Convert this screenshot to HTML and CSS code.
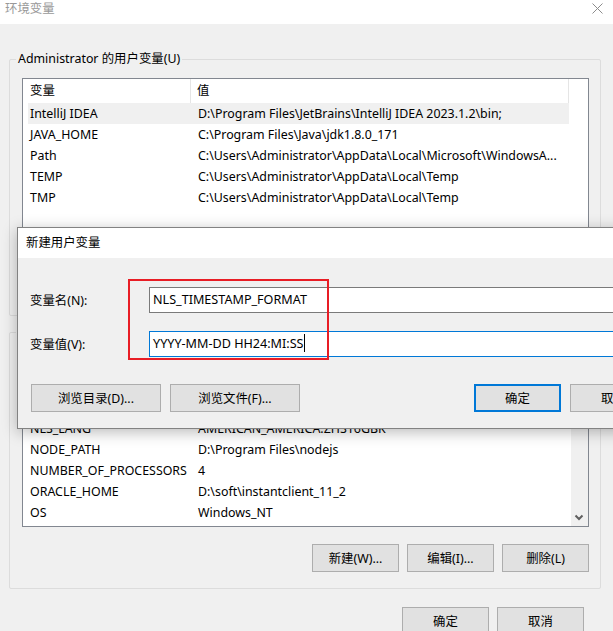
FILE: index.html
```html
<!DOCTYPE html>
<html lang="zh-CN">
  <head>
    <meta charset="UTF-8" />
    <meta name="viewport" content="width=device-width, initial-scale=1.0" />
    <title>环境变量</title>
    <link rel="stylesheet" href="styles.css">
  </head>
  <body>
    <div class="window">
      <div class="titlebar">
        <span class="title">环境变量</span>
        <svg class="close" width="11" height="11" viewBox="0 0 11 11">
          <path d="M0.5 0.5 L10.5 10.5 M10.5 0.5 L0.5 10.5" stroke="#8c8c8c" stroke-width="1" fill="none" />
        </svg>
      </div>

      <div class="client">
        <div class="group">
          <span class="group-title">Administrator 的用户变量(U)</span>
          <div class="list">
            <div class="list-body">
              <div class="list-head">
                <span class="head-name">变量</span>
                <span class="head-value">值</span>
              </div>
              <div class="row selected"><span class="cell-name">IntelliJ IDEA</span><span class="cell-value">D:\Program Files\JetBrains\IntelliJ IDEA 2023.1.2\bin;</span></div>
              <div class="row"><span class="cell-name">JAVA_HOME</span><span class="cell-value">C:\Program Files\Java\jdk1.8.0_171</span></div>
              <div class="row"><span class="cell-name">Path</span><span class="cell-value">C:\Users\Administrator\AppData\Local\Microsoft\WindowsA...</span></div>
              <div class="row"><span class="cell-name">TEMP</span><span class="cell-value">C:\Users\Administrator\AppData\Local\Temp</span></div>
              <div class="row"><span class="cell-name">TMP</span><span class="cell-value">C:\Users\Administrator\AppData\Local\Temp</span></div>
            </div>
          </div>
          <div class="group-buttons">
            <button class="btn">新建(N)...</button>
            <button class="btn">编辑(E)...</button>
            <button class="btn">删除(D)</button>
          </div>
        </div>

        <div class="group second">
          <span class="group-title">系统变量(S)</span>
          <div class="list">
            <div class="list-body">
              <div class="list-head">
                <span class="head-name">变量</span>
                <span class="head-value">值</span>
              </div>
              <div class="row"><span class="cell-name">ComSpec</span><span class="cell-value">C:\Windows\system32\cmd.exe</span></div>
              <div class="row"><span class="cell-name">DriverData</span><span class="cell-value">C:\Windows\System32\Drivers\DriverData</span></div>
              <div class="row"><span class="cell-name">NLS_LANG</span><span class="cell-value">AMERICAN_AMERICA.ZHS16GBK</span></div>
              <div class="row"><span class="cell-name">NODE_PATH</span><span class="cell-value">D:\Program Files\nodejs</span></div>
              <div class="row"><span class="cell-name">NUMBER_OF_PROCESSORS</span><span class="cell-value">4</span></div>
              <div class="row"><span class="cell-name">ORACLE_HOME</span><span class="cell-value">D:\soft\instantclient_11_2</span></div>
              <div class="row"><span class="cell-name">OS</span><span class="cell-value">Windows_NT</span></div>
            </div>
            <div class="scrollbar">
              <div class="scroll-arrow">
                <svg width="17" height="17" viewBox="0 0 17 17">
                  <path d="M4.5 6.5 L8 10 L11.5 6.5" stroke="#606060" stroke-width="2" fill="none" />
                </svg>
              </div>
            </div>
          </div>
          <div class="group-buttons">
            <button class="btn">新建(W)...</button>
            <button class="btn">编辑(I)...</button>
            <button class="btn">删除(L)</button>
          </div>
        </div>

        <div class="window-buttons">
          <button class="btn">确定</button>
          <button class="btn">取消</button>
        </div>
      </div>

      <!-- the "new user variable" dialog on top -->
      <div class="dialog">
        <div class="dialog-title">新建用户变量</div>
        <div class="dialog-body">
          <div class="field">
            <label class="field-label">变量名(N):</label>
            <div class="textbox">NLS_TIMESTAMP_FORMAT</div>
          </div>
          <div class="field">
            <label class="field-label">变量值(V):</label>
            <div class="textbox focused">YYYY-MM-DD HH24:MI:SS<span class="caret"></span></div>
          </div>
          <div class="dialog-actions">
            <div class="action-group">
              <button class="btn wide">浏览目录(D)...</button>
              <button class="btn wide">浏览文件(F)...</button>
            </div>
            <div class="action-group">
              <button class="btn default">确定</button>
              <button class="btn">取消</button>
            </div>
          </div>
        </div>
        <div class="highlight-box"></div>
      </div>
    </div>
  </body>
</html>
```

FILE: styles.css
```css
body {
  margin: 0;
  background: #f0f0f0;
  font-family: "Noto Sans", "Noto Sans CJK SC", sans-serif;
  font-size: 12.4px;
  color: #000;
}
.window {
  position: relative;
  width: 613px;
  height: 631px;
  overflow: hidden;
  background: #f0f0f0;
}
.titlebar {
  height: 24px;
  background: #fff;
  display: flex;
  justify-content: space-between;
  align-items: flex-start;
  padding: 1px 10px 0 5px;
  box-sizing: border-box;
}
.title {
  color: #999;
  line-height: 16px;
}
.close {
  margin-top: 2px;
}
.client {
  padding: 35px 12px 0 9px;
}
.group {
  position: relative;
  border: 1px solid #dcdcdc;
  border-radius: 2px;
  padding: 18px 11px 16px 12px;
}
.group.second {
  margin-top: 16px;
}
.group-title {
  position: absolute;
  top: -9px;
  left: 6px;
  padding: 0 2px;
  background: #f0f0f0;
  line-height: 16px;
}
.list {
  display: flex;
  height: 176px;
  box-sizing: border-box;
  border: 1px solid #828790;
  background: #fff;
}
.list-body {
  flex: 1;
  overflow: hidden;
}
.list-head {
  display: flex;
  height: 24px;
  line-height: 23px;
}
.head-name {
  width: 168px;
  padding-left: 7px;
  box-sizing: border-box;
  border-right: 1px solid #e5e5e5;
}
.head-value {
  width: 378px;
  padding-left: 6px;
  box-sizing: border-box;
  border-right: 1px solid #e5e5e5;
}
.row {
  display: flex;
  margin-left: 5px;
  width: 541px;
  height: 21px;
  line-height: 21px;
  white-space: nowrap;
}
.row.selected {
  background: #f0f0f0;
}
.cell-name {
  width: 164px;
  padding-left: 2px;
  box-sizing: border-box;
}
.cell-value {
  padding-left: 6px;
}
.scrollbar {
  width: 17px;
  background: #f0f0f0;
  display: flex;
  flex-direction: column;
  justify-content: flex-end;
}
.scroll-arrow {
  height: 17px;
}
.group-buttons {
  display: flex;
  justify-content: flex-end;
  gap: 8px;
  margin-top: 17px;
}
.btn {
  width: 87px;
  height: 28px;
  box-sizing: border-box;
  background: #e1e1e1;
  border: 1px solid #adadad;
  font-family: inherit;
  font-size: 12.4px;
  color: #000;
  padding: 0;
}
.btn.wide {
  width: 130px;
}
.btn.default {
  border: 2px solid #0078d7;
}
.window-buttons {
  display: flex;
  justify-content: flex-end;
  gap: 8px;
  margin-top: 18px;
  margin-right: 17px;
}
.dialog {
  position: absolute;
  left: 17px;
  top: 227px;
  width: 653px;
  height: 202px;
  box-sizing: border-box;
  border: 1px solid #828282;
  background: #f0f0f0;
  box-shadow: 0 3px 14px rgba(0, 0, 0, 0.28);
}
.dialog-title {
  height: 30px;
  line-height: 30px;
  padding-left: 8px;
  background: #fff;
}
.dialog-body {
  padding: 29px 12px 0 12px;
}
.field {
  display: flex;
  align-items: center;
  margin-bottom: 18px;
}
.field-label {
  width: 119px;
}
.textbox {
  flex: 1;
  height: 26px;
  line-height: 24px;
  box-sizing: border-box;
  border: 1px solid #7a7a7a;
  background: #fff;
  padding-left: 3px;
  white-space: nowrap;
  font-size: 12.6px;
}
.textbox.focused {
  border-color: #0078d7;
}
.caret {
  display: inline-block;
  width: 1px;
  height: 18px;
  background: #000;
  vertical-align: -4px;
  margin-left: 1px;
}
.dialog-actions {
  display: flex;
  justify-content: space-between;
  margin-top: 27px;
  padding-left: 1px;
}
.action-group {
  display: flex;
  gap: 9px;
}
.highlight-box {
  position: absolute;
  left: 110px;
  top: 51px;
  width: 201px;
  height: 81px;
  box-sizing: border-box;
  border: 2px solid #e81d25;
}
```
